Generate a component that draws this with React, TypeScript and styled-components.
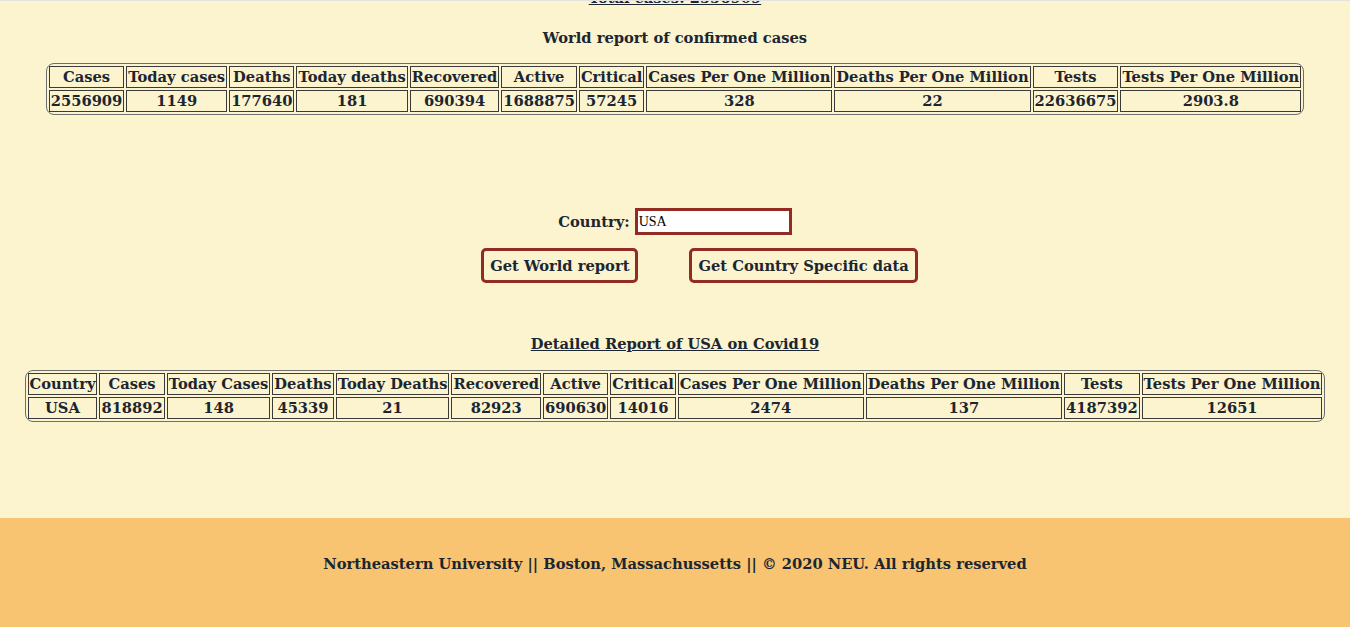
import React from "react";
import styled, { createGlobalStyle } from "styled-components";

const FS = "14.7px";

const GlobalStyle = createGlobalStyle`
  html, body {
    margin: 0;
    padding: 0;
  }
  body {
    background: #fcf3cf;
    color: #1b2631;
    font-family: "DejaVu Serif", "Liberation Serif", serif;
    font-weight: bold;
    font-size: ${FS};
    border-top: 1px solid #e3e3e3;
    overflow: hidden;
  }
`;

const Page = styled.div`
  display: flex;
  flex-direction: column;
  min-height: 626px;
`;

const Main = styled.main`
  display: flex;
  flex-direction: column;
  align-items: center;
  flex: 1;
`;

const Heading = styled.h3<{ $underline?: boolean; $mt: number; $mb: number }>`
  margin: ${(p) => p.$mt}px 0 ${(p) => p.$mb}px;
  font-size: ${FS};
  line-height: 18px;
  font-weight: bold;
  text-align: center;
  text-decoration: ${(p) => (p.$underline ? "underline" : "none")};
`;

const Table = styled.table<{ $mb: number }>`
  border-collapse: separate;
  border-spacing: 2px;
  border: 1px solid #6e6e6e;
  border-radius: 8px;
  margin-bottom: ${(p) => p.$mb}px;
`;

const Cell = styled.td`
  border: 1px solid #3a3a3a;
  padding: 1px 1px;
  line-height: 18px;
  text-align: center;
  white-space: nowrap;
  font-size: ${FS};
`;

const HeadCell = styled(Cell).attrs({ as: "th" })``;

const CountryRow = styled.div`
  display: flex;
  align-items: center;
  gap: 5px;
  margin-bottom: 13px;
`;

const Label = styled.label`
  font-size: ${FS};
  line-height: 18px;
`;

const Input = styled.input`
  box-sizing: border-box;
  width: 157px;
  height: 27px;
  border: 3px solid #922b21;
  background: #fff;
  padding: 0 1px;
  font-family: "Liberation Serif", serif;
  font-weight: normal;
  font-size: 14px;
  color: #000;
  outline: none;
`;

const ButtonRow = styled.div`
  display: flex;
  gap: 51px;
  padding-left: 49px;
  margin-bottom: 52px;
`;

const Button = styled.button`
  box-sizing: border-box;
  height: 35px;
  padding: 0 6px;
  border: 3px solid #922b21;
  border-radius: 5px;
  background: transparent;
  color: #1b2631;
  font-family: "DejaVu Serif", "Liberation Serif", serif;
  font-weight: bold;
  font-size: ${FS};
  cursor: pointer;
`;

const Footer = styled.footer`
  height: 109px;
  box-sizing: border-box;
  padding-top: 37px;
  background: #f8c471;
  text-align: center;
  font-size: ${FS};
  line-height: 18px;
`;

const worldHeaders = [
  "Cases",
  "Today cases",
  "Deaths",
  "Today deaths",
  "Recovered",
  "Active",
  "Critical",
  "Cases Per One Million",
  "Deaths Per One Million",
  "Tests",
  "Tests Per One Million",
];
const worldValues = [
  "2556909",
  "1149",
  "177640",
  "181",
  "690394",
  "1688875",
  "57245",
  "328",
  "22",
  "22636675",
  "2903.8",
];

const countryHeaders = [
  "Country",
  "Cases",
  "Today Cases",
  "Deaths",
  "Today Deaths",
  "Recovered",
  "Active",
  "Critical",
  "Cases Per One Million",
  "Deaths Per One Million",
  "Tests",
  "Tests Per One Million",
];
const countryValues = [
  "USA",
  "818892",
  "148",
  "45339",
  "21",
  "82923",
  "690630",
  "14016",
  "2474",
  "137",
  "4187392",
  "12651",
];

function StatsTable({
  headers,
  values,
  mb,
}: {
  headers: string[];
  values: string[];
  mb: number;
}) {
  return (
    <Table $mb={mb}>
      <thead>
        <tr>
          {headers.map((h) => (
            <HeadCell key={h}>{h}</HeadCell>
          ))}
        </tr>
      </thead>
      <tbody>
        <tr>
          {values.map((v, i) => (
            <Cell key={i}>{v}</Cell>
          ))}
        </tr>
      </tbody>
    </Table>
  );
}

export default function App() {
  return (
    <>
      <GlobalStyle />
      <Page>
        <Main>
          <Heading $underline $mt={-12} $mb={22}>
            Total cases: 2556909
          </Heading>
          <Heading $mt={0} $mb={16}>
            World report of confirmed cases
          </Heading>
          <StatsTable headers={worldHeaders} values={worldValues} mb={93} />
          <CountryRow>
            <Label htmlFor="country">Country:</Label>
            <Input id="country" defaultValue="USA" />
          </CountryRow>
          <ButtonRow>
            <Button>Get World report</Button>
            <Button>Get Country Specific data</Button>
          </ButtonRow>
          <Heading $underline $mt={0} $mb={17}>
            Detailed Report of USA on Covid19
          </Heading>
          <StatsTable headers={countryHeaders} values={countryValues} mb={94} />
        </Main>
        <Footer>
          Northeastern University || Boston, Massachussetts || © 2020 NEU. All
          rights reserved
        </Footer>
      </Page>
    </>
  );
}
